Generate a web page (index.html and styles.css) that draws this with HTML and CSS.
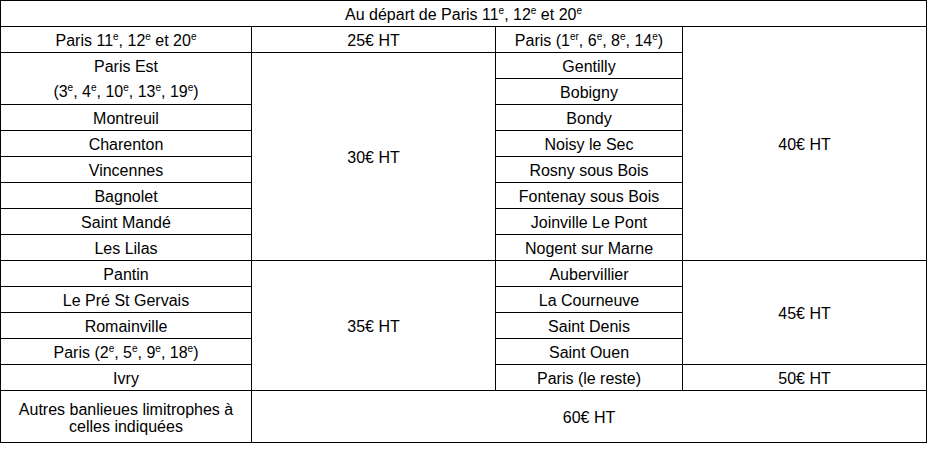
FILE: index.html
```html
<!DOCTYPE html>
<html lang="fr">
<head>
<meta charset="utf-8">
<link rel="stylesheet" href="styles.css">
</head>
<body>
<table class="tarifs">
  <colgroup>
    <col class="c1"><col class="c2"><col class="c3"><col class="c4">
  </colgroup>
  <tr class="head"><td colspan="4">Au départ de Paris 11<sup>e</sup>, 12<sup>e</sup> et 20<sup>e</sup></td></tr>
  <tr>
    <td>Paris 11<sup>e</sup>, 12<sup>e</sup> et 20<sup>e</sup></td>
    <td>25€ HT</td>
    <td>Paris (1<sup>er</sup>, 6<sup>e</sup>, 8<sup>e</sup>, 14<sup>e</sup>)</td>
    <td rowspan="9">40€ HT</td>
  </tr>
  <tr>
    <td rowspan="2" class="two">Paris Est<br>(3<sup>e</sup>, 4<sup>e</sup>, 10<sup>e</sup>, 13<sup>e</sup>, 19<sup>e</sup>)</td>
    <td rowspan="8">30€ HT</td>
    <td>Gentilly</td>
  </tr>
  <tr><td>Bobigny</td></tr>
  <tr><td>Montreuil</td><td>Bondy</td></tr>
  <tr><td>Charenton</td><td>Noisy le Sec</td></tr>
  <tr><td>Vincennes</td><td>Rosny sous Bois</td></tr>
  <tr><td>Bagnolet</td><td>Fontenay sous Bois</td></tr>
  <tr><td>Saint Mandé</td><td>Joinville Le Pont</td></tr>
  <tr><td>Les Lilas</td><td>Nogent sur Marne</td></tr>
  <tr>
    <td>Pantin</td>
    <td rowspan="5">35€ HT</td>
    <td>Aubervillier</td>
    <td rowspan="4">45€ HT</td>
  </tr>
  <tr><td>Le Pré St Gervais</td><td>La Courneuve</td></tr>
  <tr><td>Romainville</td><td>Saint Denis</td></tr>
  <tr><td>Paris (2<sup>e</sup>, 5<sup>e</sup>, 9<sup>e</sup>, 18<sup>e</sup>)</td><td>Saint Ouen</td></tr>
  <tr><td>Ivry</td><td>Paris (le reste)</td><td>50€ HT</td></tr>
  <tr class="last">
    <td class="wrap">Autres banlieues limitrophes à celles indiquées</td>
    <td colspan="3">60€ HT</td>
  </tr>
</table>
</body>
</html>
```
FILE: styles.css
```css
html, body {
  margin: 0;
  padding: 0;
  background: #fff;
}

.tarifs {
  border-collapse: collapse;
  table-layout: fixed;
  width: 927px;
  font-family: "Liberation Sans", Arial, sans-serif;
  font-size: 16px;
  color: #000;
}

.tarifs .c1 { width: 251px; }
.tarifs .c2 { width: 244px; }
.tarifs .c3 { width: 187px; }
.tarifs .c4 { width: 244px; }

.tarifs tr { height: 26px; }
.tarifs tr.head { height: 25px; }

.tarifs td {
  border: 1px solid #000;
  padding: 2px 4px 0;
  text-align: center;
  vertical-align: middle;
  line-height: 23px;
  white-space: nowrap;
}

.tarifs td.two {
  line-height: 25px;
  padding-top: 1px;
}

.tarifs tr.last { height: 52px; }

.tarifs td.wrap {
  white-space: normal;
  line-height: 17px;
  padding: 2px 14px 0;
}

.tarifs sup {
  font-size: 10px;
  line-height: 0;
  vertical-align: 6px;
}
```
